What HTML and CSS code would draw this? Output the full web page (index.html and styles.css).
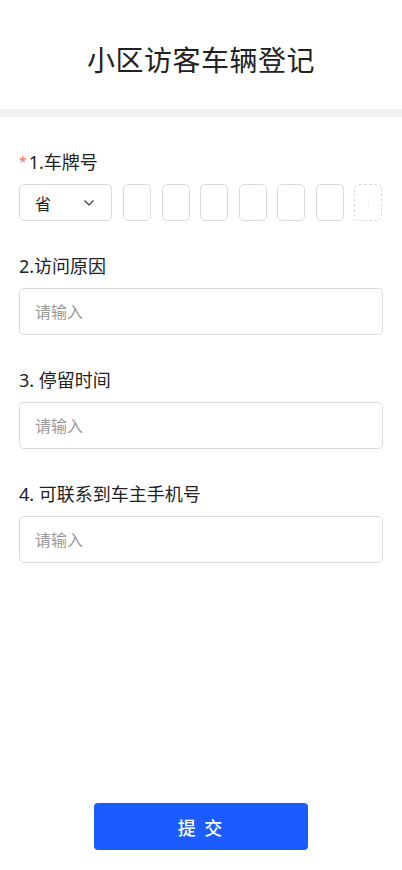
FILE: index.html
```html
<!DOCTYPE html>
<html lang="zh-CN">
<head>
    <meta charset="UTF-8">
    <meta name="viewport" content="width=device-width, initial-scale=1.0">
    <title>小区访客车辆登记</title>
    <link rel="stylesheet" href="styles.css">
</head>
<body>
    <div class="page">
        <header class="page-header">
            <h1>小区访客车辆登记</h1>
        </header>
        <div class="divider"></div>

        <form class="visit-form">
            <!-- 车牌号 -->
            <div class="field">
                <label class="field-label"><span class="required">*</span>1.车牌号</label>
                <div class="plate-row">
                    <div class="plate-province">
                        <span>省</span>
                        <svg width="12" height="8" viewBox="0 0 12 8"><path d="M1.5 1.5 L6 6 L10.5 1.5" fill="none" stroke="#333" stroke-width="1.1"/></svg>
                    </div>
                    <div class="plate-cell"></div>
                    <div class="plate-cell"></div>
                    <div class="plate-cell"></div>
                    <div class="plate-cell"></div>
                    <div class="plate-cell"></div>
                    <div class="plate-cell"></div>
                    <div class="plate-cell extra"><span class="extra-mark"></span></div>
                </div>
            </div>

            <div class="field">
                <label class="field-label">2.访问原因</label>
                <input class="text-input" type="text" placeholder="请输入">
            </div>

            <div class="field">
                <label class="field-label">3. 停留时间</label>
                <input class="text-input" type="text" placeholder="请输入">
            </div>

            <div class="field">
                <label class="field-label">4. 可联系到车主手机号</label>
                <input class="text-input" type="text" placeholder="请输入">
            </div>
        </form>

        <div class="actions">
            <button class="btn-submit" type="button">提 交</button>
        </div>
    </div>
</body>
</html>
```

FILE: styles.css
```css
:root {
    --text-color: #222;
    --border-color: #dcdcdc;
    --placeholder-color: #999;
    --accent-color: #1a5cff;
    --divider-color: #f2f2f2;
}

* {
    box-sizing: border-box;
}

body {
    margin: 0;
    font-family: "Noto Sans", "Noto Sans CJK SC", sans-serif;
    color: var(--text-color);
    background: #fff;
}

.page {
    min-height: 100vh;
    display: flex;
    flex-direction: column;
}

.page-header {
    height: 109px;
    display: flex;
    align-items: center;
    justify-content: center;
}

h1 {
    margin: 0;
    padding-top: 8px;
    font-size: 28px;
    font-weight: 400;
    letter-spacing: 0.5px;
}

.divider {
    height: 8px;
    background: var(--divider-color);
}

.visit-form {
    flex: 1;
    padding: 33px 19px 0;
    display: flex;
    flex-direction: column;
    gap: 33px;
}

.field {
    display: flex;
    flex-direction: column;
    gap: 10px;
}

.field-label {
    font-size: 18px;
    line-height: 24px;
}

.required {
    color: #f56c6c;
    font-size: 14px;
    vertical-align: 2px;
    margin-right: 2px;
}

.plate-row {
    display: flex;
    gap: 10.5px;
    height: 37px;
}

.plate-province {
    width: 93px;
    border: 1px solid var(--border-color);
    border-radius: 5px;
    display: flex;
    align-items: center;
    justify-content: space-between;
    padding: 0 16px 0 15px;
    font-size: 16px;
    margin-right: 0.5px;
}

.plate-cell {
    width: 28px;
    border: 1px solid var(--border-color);
    border-radius: 5px;
    display: flex;
    align-items: center;
    justify-content: center;
}

.plate-cell.extra {
    border-style: dashed;
}

.extra-mark {
    width: 1px;
    height: 8px;
    background: #f0f0f0;
}

.text-input {
    height: 47px;
    width: 100%;
    border: 1px solid var(--border-color);
    border-radius: 5px;
    padding: 0 15px;
    font-family: inherit;
    font-size: 16px;
    color: var(--text-color);
    outline: none;
}

.text-input::placeholder {
    color: var(--placeholder-color);
}

.actions {
    display: flex;
    justify-content: center;
    padding-bottom: 20px;
}

.btn-submit {
    width: 214px;
    height: 47px;
    border: none;
    border-radius: 4px;
    background: var(--accent-color);
    color: #fff;
    font-family: inherit;
    font-size: 18px;
    font-weight: 500;
    letter-spacing: 2px;
    cursor: pointer;
}
```
